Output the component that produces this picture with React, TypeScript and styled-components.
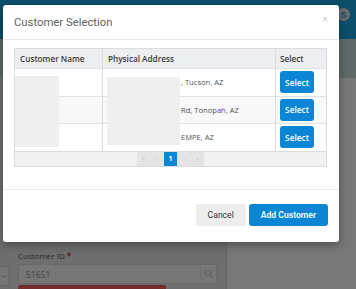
import React, { FC } from "react";
import styled, { createGlobalStyle } from "styled-components";

const GlobalStyle = createGlobalStyle`
  html, body {
    margin: 0;
    padding: 0;
    overflow: hidden;
  }
  body {
    font-family: "Open Sans", "Liberation Sans", Arial, sans-serif;
  }
`;

interface Customer {
  id: string;
  // only the tail of the address shows next to the redaction box
  visible: string;
}

const customers: Customer[] = [
  { id: "c1", visible: ", Tucson, AZ" },
  { id: "c2", visible: "Rd, Tonopah, AZ" },
  { id: "c3", visible: "EMPE, AZ" },
];

const App: FC = () => {
  return (
    <>
      <GlobalStyle />
      <Page>
        <TopBar>
          <Avatar>S</Avatar>
        </TopBar>
        <SubBar />
        <Content>
          <LeftPane>
            <FormRow>
              <SelectStub>
                <Chevron viewBox="0 0 10 10">
                  <path d="M2 3.5 L5 6.5 L8 3.5" />
                </Chevron>
              </SelectStub>
              <Field>
                <Label>
                  Customer ID <Req>*</Req>
                </Label>
                <InputBox>
                  <InputValue>51651</InputValue>
                  <SearchAddon>
                    <svg viewBox="0 0 16 16" width="10" height="10">
                      <circle cx="6.5" cy="6.5" r="4.5" fill="none" stroke="#c8c8c8" strokeWidth="2" />
                      <path d="M10 10 L14 14" stroke="#c8c8c8" strokeWidth="2.4" strokeLinecap="round" />
                    </svg>
                  </SearchAddon>
                </InputBox>
                <DangerBar />
              </Field>
            </FormRow>
          </LeftPane>
          <RightPane />
        </Content>

        <Backdrop />

        <Modal>
          <ModalHeader>
            <Title>Customer Selection</Title>
            <Close>×</Close>
          </ModalHeader>
          <ModalBody>
            <TableWrap>
              <Table>
                <thead>
                  <tr>
                    <Th $w={77}>Customer Name</Th>
                    <Th>Physical Address</Th>
                    <Th $w={42} $pad={4}>Select</Th>
                  </tr>
                </thead>
                <tbody>
                  {customers.map((c, i) => (
                    <Tr key={c.id} $striped={i % 2 === 1}>
                      <Td />
                      <AddrTd>
                        <Spacer />
                        {c.visible}
                      </AddrTd>
                      <Td>
                        <SelectBtn>Select</SelectBtn>
                      </Td>
                    </Tr>
                  ))}
                </tbody>
              </Table>
              {/* redacted personal data */}
              <Redact style={{ left: 0, top: 27, width: 44, height: 71 }} />
              <Redact style={{ left: 92, top: 28, width: 73, height: 68 }} />
              <Pager>
                <PageBtn>«</PageBtn>
                <PageBtn>‹</PageBtn>
                <PageBtn $active>1</PageBtn>
                <PageBtn>›</PageBtn>
                <PageBtn>»</PageBtn>
              </Pager>
            </TableWrap>
          </ModalBody>
          <ModalFooter>
            <Button>Cancel</Button>
            <Button $primary>Add Customer</Button>
          </ModalFooter>
        </Modal>
      </Page>
    </>
  );
};

const Page = styled.div`
  position: relative;
  width: 356px;
  height: 289px;
  overflow: hidden;
  background: #dcdcdc;
  display: flex;
  flex-direction: column;
`;

const TopBar = styled.div`
  height: 39px;
  flex-shrink: 0;
  background: #179ed4;
  display: flex;
  justify-content: flex-end;
  align-items: flex-start;
  padding: 8px 0 0;
  box-sizing: border-box;
`;

const Avatar = styled.div`
  width: 13px;
  height: 13px;
  border-radius: 50%;
  background: #d8d8d8;
  color: #179ed4;
  font: bold 9px "Liberation Sans", Arial, sans-serif;
  display: flex;
  align-items: center;
  justify-content: center;
  margin-right: 6px;
`;

const SubBar = styled.div`
  height: 39px;
  flex-shrink: 0;
  background: #bad4cf;
`;

const Content = styled.div`
  flex: 1;
  display: flex;
`;

const LeftPane = styled.div`
  width: 227px;
  border-right: 1px solid #cfcfcf;
  padding-top: 169px;
  box-sizing: border-box;
`;

const RightPane = styled.div`
  flex: 1;
  background: #f0f0f0;
`;

const FormRow = styled.div`
  display: flex;
  gap: 9px;
`;

const SelectStub = styled.div`
  width: 8px;
  height: 18px;
  margin-top: 19px;
  border: 1px solid #d0d0d0;
  border-left: none;
  background: #ebebeb;
  display: flex;
  align-items: center;
`;

const Chevron = styled.svg`
  width: 7px;
  height: 7px;
  fill: none;
  stroke: #999;
  stroke-width: 1.2;
`;

const Field = styled.div`
  width: 199px;
  display: flex;
  flex-direction: column;
`;

const Label = styled.div`
  font: 8px "Open Sans", "Liberation Sans", Arial, sans-serif;
  color: #545454;
  height: 14px;
  line-height: 14px;
  margin-top: 2px;
`;

const Req = styled.span`
  color: #c0392b;
  font-weight: bold;
`;

const InputBox = styled.div`
  height: 18px;
  margin-top: 1px;
  border: 1px solid #d4d4d4;
  border-radius: 2px;
  background: #ececec;
  display: flex;
  align-items: center;
`;

const InputValue = styled.span`
  flex: 1;
  padding-left: 7px;
  font: 8.5px "Open Sans", "Liberation Sans", Arial, sans-serif;
  color: #909090;
`;

const SearchAddon = styled.div`
  width: 15px;
  height: 100%;
  border-left: 1px solid #dcdcdc;
  display: flex;
  align-items: center;
  justify-content: center;
`;

const DangerBar = styled.div`
  width: 148px;
  height: 10px;
  margin-top: 1px;
  border-radius: 2px;
  background: #e85a5a;
`;

const Backdrop = styled.div`
  position: absolute;
  inset: 0;
  background: rgba(0, 0, 0, 0.5);
`;

const Modal = styled.div`
  position: absolute;
  left: 3px;
  top: 5px;
  width: 336px;
  height: 237px;
  background: #fff;
  border-radius: 3px;
  box-shadow: 0 3px 10px rgba(0, 0, 0, 0.35);
  display: flex;
  flex-direction: column;
`;

const ModalHeader = styled.div`
  height: 35px;
  box-sizing: border-box;
  border-bottom: 1px solid #e8e8e8;
  display: flex;
  align-items: center;
  justify-content: space-between;
  padding: 0 11px 0 11px;
`;

const Title = styled.div`
  font: 11.3px Roboto, "Liberation Sans", Arial, sans-serif;
  color: #5f5f5f;
`;

const Close = styled.div`
  font: 10px "Liberation Sans", Arial, sans-serif;
  color: #c4c4c4;
  margin-top: -6px;
`;

const ModalBody = styled.div`
  padding: 8px 12px 0 11px;
  height: 150px;
  box-sizing: border-box;
  border-bottom: 1px solid #ececec;
`;

const TableWrap = styled.div`
  position: relative;
  border: 1px solid #dcdcdc;
`;

const Table = styled.table`
  width: 100%;
  border-collapse: collapse;
  table-layout: fixed;
  font-family: "Open Sans", "Liberation Sans", Arial, sans-serif;
`;

const Th = styled.th<{ $w?: number; $pad?: number }>`
  width: ${(p) => (p.$w ? `${p.$w}px` : "auto")};
  height: 19px;
  padding: 0 ${(p) => p.$pad ?? 5}px;
  text-align: left;
  font-size: 8.2px;
  font-weight: 600;
  color: #3a3a3a;
  background: #eceef1;
  border-left: 1px solid #dcdcdc;
  &:first-child {
    border-left: none;
  }
`;

const Tr = styled.tr<{ $striped?: boolean }>`
  background: ${(p) => (p.$striped ? "#f8f8f8" : "#fff")};
  border-top: 1px solid #e2e2e2;
`;

const Td = styled.td`
  height: 26.5px;
  padding: 0 4px;
  border-left: 1px solid #dcdcdc;
  font-size: 7.6px;
  color: #555;
  &:first-child {
    border-left: none;
  }
`;

const AddrTd = styled(Td)`
  white-space: nowrap;
  overflow: hidden;
  padding-left: 5px;
`;

const Spacer = styled.span`
  display: inline-block;
  width: 73px;
`;

const SelectBtn = styled.button`
  width: 34px;
  height: 22px;
  border: none;
  border-radius: 3px;
  background: #0a86d5;
  color: #fff;
  font: 600 8.3px "Open Sans", "Liberation Sans", Arial, sans-serif;
  padding: 0;
`;

const Redact = styled.div`
  position: absolute;
  background: #efefef;
`;

const Pager = styled.div`
  height: 14px;
  border-top: 1px solid #dcdcdc;
  background: #f1f1f1;
  display: flex;
  justify-content: center;
`;

const PageBtn = styled.div<{ $active?: boolean }>`
  width: 13.5px;
  height: 14px;
  display: flex;
  align-items: center;
  justify-content: center;
  font: ${(p) => (p.$active ? "bold 7px" : "7px")} "Open Sans", "Liberation Sans", Arial, sans-serif;
  color: ${(p) => (p.$active ? "#fff" : "#c9c9c9")};
  background: ${(p) => (p.$active ? "#0a86d5" : "#e4e4e4")};
`;

const ModalFooter = styled.div`
  flex: 1;
  display: flex;
  justify-content: flex-end;
  align-items: flex-start;
  gap: 3px;
  padding: 14px 11px 0 0;
`;

const Button = styled.button<{ $primary?: boolean }>`
  height: 22px;
  padding: 0 12px;
  border: none;
  border-radius: 3px;
  background: ${(p) => (p.$primary ? "#0a86d5" : "#ededed")};
  color: ${(p) => (p.$primary ? "#fff" : "#333")};
  font: ${(p) => (p.$primary ? "600" : "400")} 8.6px Roboto, "Liberation Sans", Arial, sans-serif;
`;

export default App;
